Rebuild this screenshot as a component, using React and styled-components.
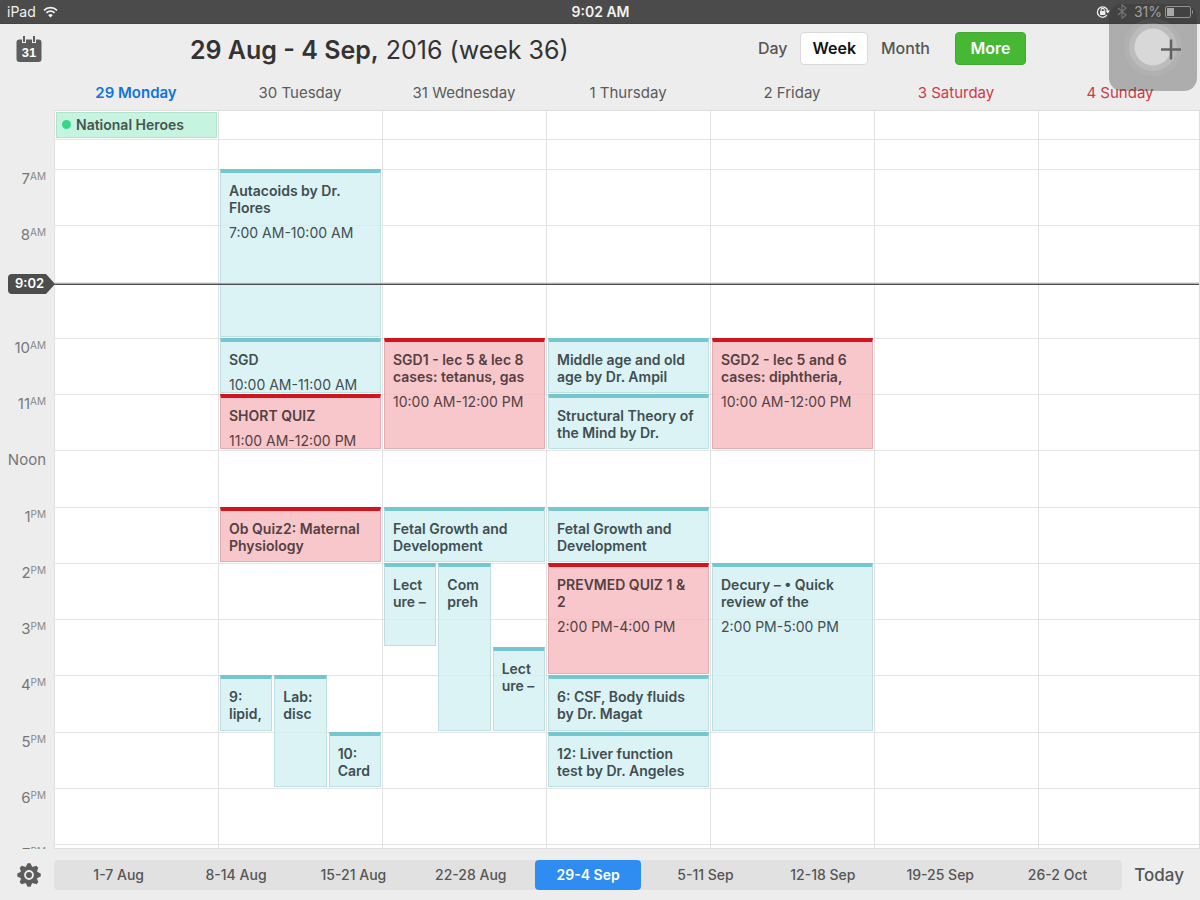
import React from "react";
import styled, { createGlobalStyle } from "styled-components";

const ui = `Inter, "Liberation Sans", sans-serif`;

const GlobalStyle = createGlobalStyle`
  *, *::before, *::after { box-sizing: border-box; }
  body { margin: 0; background: #ededed; font-family: ${ui}; color: #555; }
  button { font: inherit; color: inherit; border: 0; background: none; padding: 0; cursor: pointer; }
  h1, h2, h3, p { margin: 0; }
`;

const Screen = styled.div`
  position: relative;
  display: flex;
  flex-direction: column;
  height: 100vh;
  overflow: hidden;
`;

const StatusBar = styled.header`
  display: grid;
  grid-template-columns: 1fr auto 1fr;
  align-items: center;
  height: 24px;
  flex: none;
  padding: 0 6px 0 7px;
  background: #4b4b4b;
  border-bottom: 1px solid #444;
  color: #f2f2f2;
  font-size: 14px;
`;

const StatusGroup = styled.div`
  display: flex;
  align-items: center;
  gap: 7px;
  justify-content: ${(p) => (p.$end ? "flex-end" : "flex-start")};
  color: ${(p) => (p.$end ? "#d8d8d8" : "inherit")};
`;

const BatteryLevel = styled.span`
  display: flex;
  align-items: center;
  gap: 3px;
`;

const Clock = styled.time`
  font-weight: 600;
`;

const Toolbar = styled.div`
  display: flex;
  align-items: center;
  height: 52px;
  flex: none;
  padding: 0 174px 4px 16px;
`;

const IconButton = styled.button`
  display: flex;
  flex: none;
  color: #5c5c5c;
`;

const Title = styled.h1`
  flex: 1;
  padding: 4px 0 0 148px;
  font-size: 25px;
  font-weight: 400;
  line-height: 32px;
  color: #333;
  white-space: nowrap;
  b { font-weight: 600; }
`;

const ViewSwitch = styled.nav`
  display: flex;
  align-items: center;
`;

const ViewButton = styled.button`
  && {
    height: 33px;
    padding: 0 ${(p) => (p.$active ? 11 : 12)}px;
    font-size: 16px;
    font-weight: ${(p) => (p.$active ? 600 : 500)};
    color: ${(p) => (p.$active ? "#111" : "#555")};
    background: ${(p) => (p.$active ? "#fff" : "transparent")};
    border: 1px solid ${(p) => (p.$active ? "#d9d9d9" : "transparent")};
    border-radius: 4px;
  }
`;

const MoreButton = styled.button`
  && {
    height: 33px;
    width: 71px;
    margin-left: 12px;
    font-size: 16px;
    font-weight: 600;
    color: #fff;
    background: #46b833;
    border: 1px solid #41a931;
    border-radius: 4px;
  }
`;

const DayNames = styled.div`
  display: grid;
  grid-template-columns: repeat(7, 1fr);
  flex: none;
  height: 34px;
  margin: 0 -2px 0 54px;
`;

const DayName = styled.h2`
  font-size: 15px;
  line-height: 34px;
  text-align: center;
  font-weight: ${(p) => (p.$today ? 600 : 400)};
  color: ${(p) => (p.$today ? "#0f74dc" : p.$weekend ? "#cc3b44" : "#5a5a5a")};
`;

const Main = styled.main`
  display: flex;
  flex: 1;
  min-height: 0;
  overflow: hidden;
`;

const HourGutter = styled.div`
  flex: none;
  width: 54px;
  padding-top: 59px;
`;

const HourList = styled.div`
  position: relative;
  display: grid;
  grid-template-rows: repeat(12, 1fr) 20px;
  height: 695px;
`;

const HourLabel = styled.div`
  padding-right: 8px;
  text-align: right;
  font-size: 15px;
  line-height: 20px;
  color: #777;
  visibility: ${(p) => (p.$hidden ? "hidden" : "visible")};
  small { font-size: 10px; vertical-align: 4px; line-height: 1; color: #888; }
`;

const Board = styled.section`
  flex: 1;
  min-width: 0;
  overflow: hidden;
  background: #fff;
  border: 1px solid #dedede;
  border-left: 0;
`;

const BoardInner = styled.div`
  position: relative;
  display: grid;
  grid-template-columns: repeat(7, 1fr);
  margin-right: -3px;
`;

const DayColumn = styled.div`
  border-left: 1px solid #e2e2e2;
  min-width: 0;
`;

const AllDay = styled.div`
  height: 29px;
  padding: 1px;
  border-bottom: 1px solid #e4e4e4;
`;

const AllDayEvent = styled.h3`
  display: flex;
  align-items: center;
  gap: 5px;
  height: 26px;
  padding: 0 5px 1px;
  font-size: 14px;
  font-weight: 600;
  color: #45564f;
  background: #c7f4e0;
  border: 1px solid #b2e3cd;
  &::before {
    content: "";
    width: 9px;
    height: 9px;
    border-radius: 50%;
    background: #36d68c;
  }
`;

const Early = styled.div`
  height: 29px;
`;

const Slots = styled.div`
  display: grid;
  grid-template-columns: repeat(3, 1fr);
  grid-template-rows: repeat(24, 1fr);
  column-gap: 2px;
  height: 675px;
  padding: 0 1px;
`;

const HourCell = styled.div`
  grid-column: 1 / -1;
  margin: 0 -1px;
  grid-row: ${(p) => p.$row} / span 2;
  border-top: 1px solid #e4e4e4;
`;

const tones = {
  teal: { bar: "#74c7ce", fill: "rgba(209, 239, 242, .76)", edge: "#bfe0e3", text: "#3f4e52" },
  red: { bar: "#d2141f", fill: "rgba(245, 182, 186, .76)", edge: "#e6abaf", text: "#553f42" },
};

const Event = styled.article`
  grid-column: ${(p) => p.$col};
  grid-row: ${(p) => p.$row} / span ${(p) => p.$span};
  min-width: 0;
  min-height: 0;
  margin-bottom: 1px;
  overflow: hidden;
  padding: 9px 7px 0 8px;
  font-size: 14px;
  line-height: 17px;
  color: ${(p) => tones[p.$tone].text};
  background: ${(p) => tones[p.$tone].fill};
  background-clip: padding-box;
  border: 1px solid ${(p) => tones[p.$tone].edge};
  border-top: 4px solid ${(p) => tones[p.$tone].bar};
`;

const EventTitle = styled.h3`
  max-height: 34px;
  overflow: hidden;
  font: inherit;
  font-weight: 600;
`;

const EventTime = styled.p`
  margin-top: 8px;
  white-space: nowrap;
`;

const LastCell = styled.div`
  height: 20px;
  border-top: 1px solid #e4e4e4;
`;

const NowLine = styled.div`
  position: absolute;
  top: 173px;
  left: 0;
  right: 0;
  height: 1px;
  background: #4d4d4d;
  box-shadow: 0 -1px rgba(77, 77, 77, .45);
`;

const NowTag = styled.time`
  position: absolute;
  top: 105px;
  left: 8px;
  width: 47px;
  height: 20px;
  padding-left: 7px;
  font-size: 13px;
  font-weight: 600;
  line-height: 19px;
  color: #fff;
  background: #4d4d4d;
  border-radius: 4px 0 0 4px;
  clip-path: polygon(0 0, 38px 0, 47px 10px, 38px 100%, 0 100%);
`;

const Footer = styled.footer`
  display: flex;
  align-items: center;
  flex: none;
  height: 51px;
  padding: 0 16px 0 17px;
`;

const WeekStrip = styled.nav`
  display: grid;
  grid-template-columns: repeat(9, 1fr);
  flex: 1;
  height: 30px;
  margin: 0 12px 0 13px;
  padding: 0 6px;
  background: #e1e1e1;
  border-radius: 4px;
`;

const WeekButton = styled.button`
  && {
    margin: 0 6px;
    font-size: 14px;
    font-weight: ${(p) => (p.$active ? 600 : 500)};
    white-space: nowrap;
    color: ${(p) => (p.$active ? "#fff" : "#555")};
    background: ${(p) => (p.$active ? "#2f8cf0" : "transparent")};
    border-radius: 4px;
  }
`;

const TodayButton = styled.button`
  && {
    font-size: 17px;
    font-weight: 500;
    color: #555;
  }
`;

const TouchPad = styled.div`
  position: absolute;
  top: 4px;
  right: 3px;
  display: flex;
  align-items: center;
  justify-content: center;
  width: 88px;
  height: 87px;
  border-radius: 13px;
  background: rgba(50, 50, 50, .34);
`;

const WifiIcon = () => (
  <svg width="15" height="12" viewBox="0 0 15 12" fill="none" stroke="#f2f2f2" strokeWidth="1.8">
    <path d="M1 4.3a9.3 9.3 0 0 1 13 0" />
    <path d="M3.4 6.9a5.8 5.8 0 0 1 8.2 0" />
    <path d="M7.5 11.6 5.2 9.2a3.3 3.3 0 0 1 4.6 0z" fill="#f2f2f2" stroke="none" />
  </svg>
);

const LockIcon = () => (
  <svg width="14" height="14" viewBox="0 0 14 14" fill="none" stroke="#ececec">
    <path d="M10.8 10.200A5.200 5.200 0 1 1 11.700 6" strokeWidth="1.300" />
    <path d="M9.500 5.600h4.500l-2.200 3z" fill="#ececec" stroke="none" />
    <rect x="4" y="6" width="5.400" height="4" rx=".5" fill="#ececec" stroke="none" />
    <path d="M5.100 6.200V5a1.600 1.600 0 0 1 3.200 0v1.200" strokeWidth="1.100" />
  </svg>
);

const BluetoothIcon = () => (
  <svg width="10" height="15" viewBox="0 0 10 15" fill="none" stroke="#959595" strokeWidth="1.2">
    <path d="M1 4l8 7-4 3.2V.8L9 4l-8 7" />
  </svg>
);

const BatteryIcon = () => (
  <svg width="29" height="12" viewBox="0 0 29 12">
    <rect x=".5" y=".5" width="25" height="11" rx="1.5" fill="none" stroke="#c5c5c5" />
    <rect x="2" y="2" width="7" height="8" fill="#e4e4e4" />
    <path d="M27 4c1.400 .3 1.400 3.700 0 4z" fill="#c5c5c5" />
  </svg>
);

const CalendarIcon = () => (
  <svg width="26" height="27" viewBox="0 0 26 27">
    <path
      fill="#5c5c5c"
      d="M3.500 4.500H6V8h4V4.500h6V8h4V4.500h2.500a3 3 0 0 1 3 3V24a3 3 0 0 1-3 3H3.500a3 3 0 0 1-3-3V7.500a3 3 0 0 1 3-3z"
    />
    <path fill="#5c5c5c" d="M7 1h2v6H7zM17 1h2v6h-2z" />
    <text x="13" y="22" textAnchor="middle" fontFamily="Liberation Sans, sans-serif" fontSize="13" fontWeight="700" fill="#fff">
      31
    </text>
  </svg>
);

const teeth = [0, 45, 90, 135, 180, 225, 270, 315];
const GearIcon = () => (
  <svg width="24" height="24" viewBox="-12 -12 24 24">
    {teeth.map((a) => (
      <path key={a} d="M-3.200-8L-1.500-11.700h3L3.200-8z" fill="#5c5c5c" transform={`rotate(${a})`} />
    ))}
    <circle r="6.900" fill="none" stroke="#5c5c5c" strokeWidth="4" />
    <circle r="3" fill="#5c5c5c" />
  </svg>
);

const TouchIcon = () => (
  <svg width="88" height="87" viewBox="0 0 88 87">
    <circle cx="44" cy="43" r="29" fill="#fff" opacity=".06" />
    <circle cx="44" cy="43" r="24" fill="#fff" opacity=".14" />
    <circle cx="44" cy="43" r="18.500" fill="#fff" opacity=".42" />
    <path d="M62 35.500v20M52 45.500h20" stroke="#626262" strokeWidth="2.500" />
  </svg>
);

const hours = [
  ["7", "AM"], ["8", "AM"], ["9", "AM"], ["10", "AM"], ["11", "AM"], ["Noon", ""],
  ["1", "PM"], ["2", "PM"], ["3", "PM"], ["4", "PM"], ["5", "PM"], ["6", "PM"], ["7", "PM"],
];

const ev = (start, end, title, time, tone = "teal", lane) => ({ start, end, title, time, tone, lane });

const days = [
  { name: "29 Monday", today: true, allDay: "National Heroes", events: [] },
  {
    name: "30 Tuesday",
    events: [
      ev(7, 10, "Autacoids by Dr. Flores", "7:00 AM-10:00 AM"),
      ev(10, 11, "SGD", "10:00 AM-11:00 AM"),
      ev(11, 12, "SHORT QUIZ", "11:00 AM-12:00 PM", "red"),
      ev(13, 14, "Ob Quiz2: Maternal Physiology", "", "red"),
      ev(16, 17, "9: lipid,", "", "teal", 1),
      ev(16, 18, "Lab: disc", "", "teal", 2),
      ev(17, 18, "10: Card", "", "teal", 3),
    ],
  },
  {
    name: "31 Wednesday",
    events: [
      ev(10, 12, "SGD1 - lec 5 & lec 8 cases: tetanus, gas", "10:00 AM-12:00 PM", "red"),
      ev(13, 14, "Fetal Growth and Development"),
      ev(14, 15.5, "Lect\nure –", "", "teal", 1),
      ev(14, 17, "Com\npreh", "", "teal", 2),
      ev(15.5, 17, "Lect\nure –", "", "teal", 3),
    ],
  },
  {
    name: "1 Thursday",
    events: [
      ev(10, 11, "Middle age and old age by Dr. Ampil"),
      ev(11, 12, "Structural Theory of the Mind by Dr."),
      ev(13, 14, "Fetal Growth and Development"),
      ev(14, 16, "PREVMED QUIZ 1 &\n2", "2:00 PM-4:00 PM", "red"),
      ev(16, 17, "6: CSF, Body fluids by Dr. Magat"),
      ev(17, 18, "12: Liver function test by Dr. Angeles"),
    ],
  },
  {
    name: "2 Friday",
    events: [
      ev(10, 12, "SGD2 - lec 5 and 6 cases: diphtheria,", "10:00 AM-12:00 PM", "red"),
      ev(14, 17, "Decury – • Quick review of the", "2:00 PM-5:00 PM"),
    ],
  },
  { name: "3 Saturday", weekend: true, events: [] },
  { name: "4 Sunday", weekend: true, events: [] },
];

const weeks = ["1-7 Aug", "8-14 Aug", "15-21 Aug", "22-28 Aug", "29-4 Sep", "5-11 Sep", "12-18 Sep", "19-25 Sep", "26-2 Oct"];

const EventCard = ({ event }) => (
  <Event
    $tone={event.tone}
    $col={event.lane || "1 / -1"}
    $row={(event.start - 7) * 2 + 1}
    $span={(event.end - event.start) * 2}
  >
    <EventTitle>
      {event.title.split("\n").map((part, i) => (
        <React.Fragment key={i}>
          {i > 0 && <br />}
          {part}
        </React.Fragment>
      ))}
    </EventTitle>
    {event.time && <EventTime>{event.time}</EventTime>}
  </Event>
);

export default function App() {
  return (
    <Screen>
      <GlobalStyle />
      <StatusBar>
        <StatusGroup>
          iPad <WifiIcon />
        </StatusGroup>
        <Clock>9:02 AM</Clock>
        <StatusGroup $end>
          <LockIcon />
          <BluetoothIcon />
          <BatteryLevel>
            31% <BatteryIcon />
          </BatteryLevel>
        </StatusGroup>
      </StatusBar>
      <Toolbar>
        <IconButton aria-label="Calendars">
          <CalendarIcon />
        </IconButton>
        <Title>
          <b>29 Aug - 4 Sep,</b> 2016 (week 36)
        </Title>
        <ViewSwitch>
          <ViewButton>Day</ViewButton>
          <ViewButton $active>Week</ViewButton>
          <ViewButton>Month</ViewButton>
        </ViewSwitch>
        <MoreButton>More</MoreButton>
      </Toolbar>
      <DayNames>
        {days.map((d) => (
          <DayName key={d.name} $today={d.today} $weekend={d.weekend}>
            {d.name}
          </DayName>
        ))}
      </DayNames>
      <Main>
        <HourGutter>
          <HourList>
            {hours.map(([n, half], i) => (
              <HourLabel key={i} $hidden={i === 2}>
                {n}
                <small>{half}</small>
              </HourLabel>
            ))}
            <NowTag>9:02</NowTag>
          </HourList>
        </HourGutter>
        <Board>
          <BoardInner>
            {days.map((d) => (
              <DayColumn key={d.name}>
                <AllDay>{d.allDay && <AllDayEvent>{d.allDay}</AllDayEvent>}</AllDay>
                <Early />
                <Slots>
                  {hours.slice(0, 12).map((_, i) => (
                    <HourCell key={i} $row={i * 2 + 1} />
                  ))}
                  {d.events.map((e, i) => (
                    <EventCard key={i} event={e} />
                  ))}
                </Slots>
                <LastCell />
              </DayColumn>
            ))}
            <NowLine />
          </BoardInner>
        </Board>
      </Main>
      <Footer>
        <IconButton aria-label="Settings">
          <GearIcon />
        </IconButton>
        <WeekStrip>
          {weeks.map((w) => (
            <WeekButton key={w} $active={w === "29-4 Sep"}>
              {w}
            </WeekButton>
          ))}
        </WeekStrip>
        <TodayButton>Today</TodayButton>
      </Footer>
      <TouchPad>
        <TouchIcon />
      </TouchPad>
    </Screen>
  );
}
